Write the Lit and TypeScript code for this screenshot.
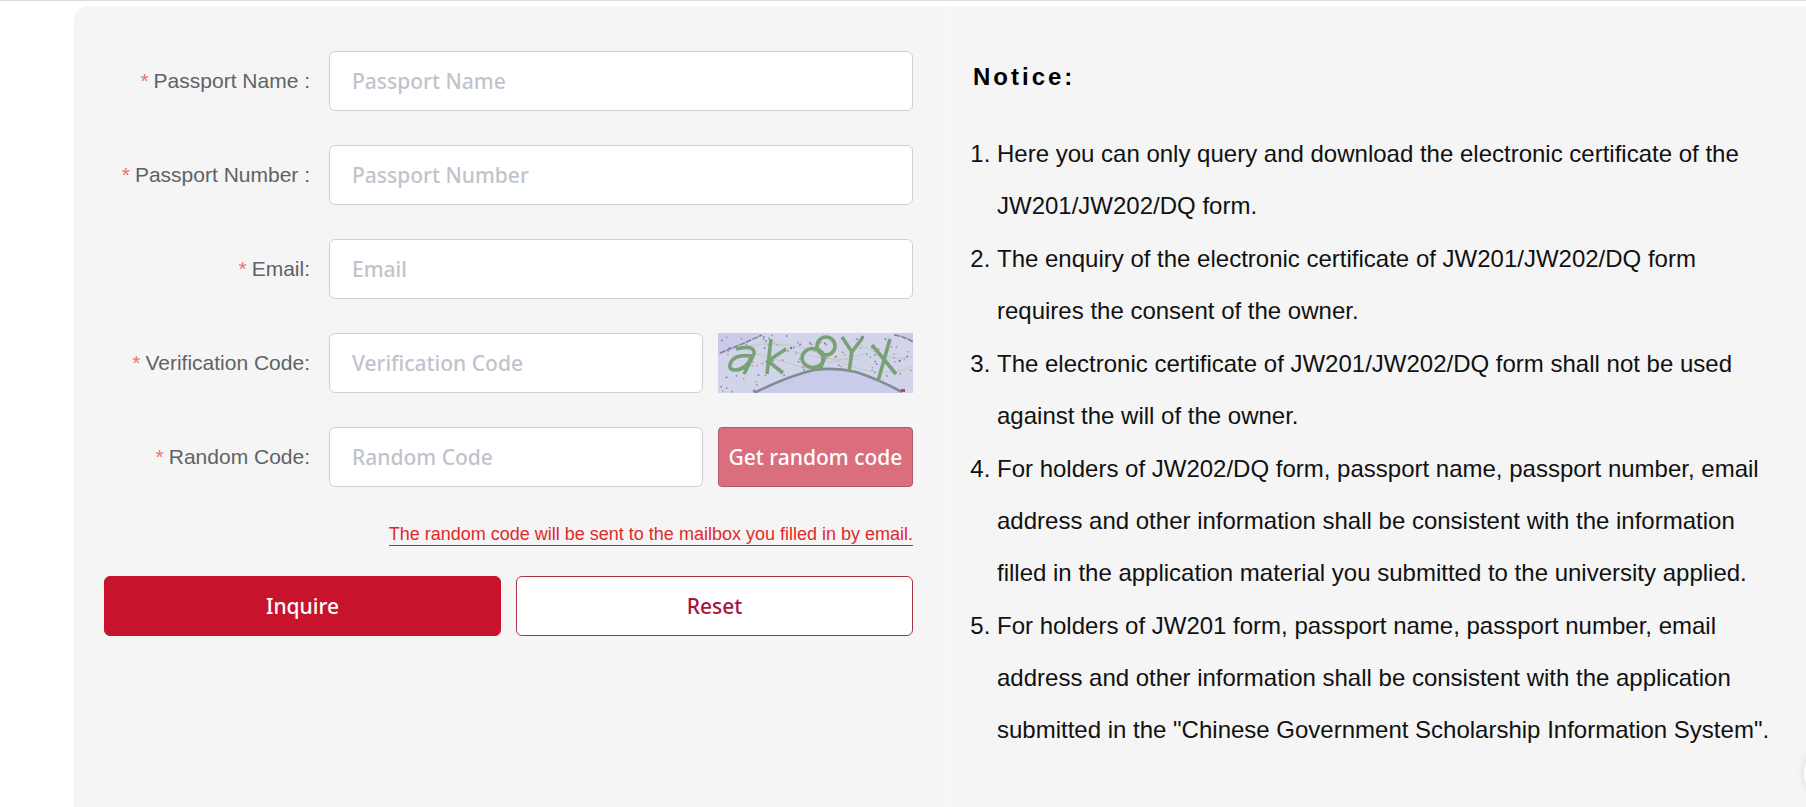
import { LitElement, html, svg, css } from "lit";
import { customElement } from "lit/decorators.js";

const NOTICES = [
  "Here you can only query and download the electronic certificate of the JW201/JW202/DQ form.",
  "The enquiry of the electronic certificate of JW201/JW202/DQ form requires the consent of the owner.",
  "The electronic certificate of JW201/JW202/DQ form shall not be used against the will of the owner.",
  "For holders of JW202/DQ form, passport name, passport number, email address and other information shall be consistent with the information filled in the application material you submitted to the university applied.",
  'For holders of JW201 form, passport name, passport number, email address and other information shall be consistent with the application submitted in the "Chinese Government Scholarship Information System".',
];

@customElement("captcha-picture")
class CaptchaPicture extends LitElement {
  static styles = css`
    :host { display: block; }
    .art { display: block; width: 100%; height: 100%; }
  `;

  // Deterministic speckles spread over the band above the arc
  private specks() {
    const colours = ["#4a4590", "#a25a98", "#c0606c", "#7d9a78", "#5a58b0", "#b98a50"];
    const out = [];
    let seed = 41;
    const next = () => (seed = (seed * 1103515245 + 12345) % 2147483648) / 2147483648;
    for (let i = 0; i < 130; i++) {
      const x = next() * 193;
      const y = next() * 58;
      const c = colours[Math.floor(next() * colours.length)];
      const arc = 34 + Math.pow((x - 115) / 78, 2) * 24;
      if (y < arc) out.push(svg`<rect x=${x} y=${y} width="1.5" height="1.5" fill=${c} opacity="0.75" />`);
    }
    return out;
  }

  render() {
    return html`<svg class="art" viewBox="0 0 195 60" preserveAspectRatio="none" role="img" aria-label="Verification code picture">
      <rect width="195" height="60" fill="#cacbea" />
      <path d="M0 24 L44 0 H175 L195 10 V60 H184 Q114 14 38 60 H0Z" fill="#d2d4ea" />
      <g fill="none" stroke="#bccdc3" stroke-width="1">
        <path d="M4 20 Q60 0 110 24 T194 34M30 18 L96 38M50 6 Q90 30 140 26M110 30 L150 20M140 10 Q170 30 194 24" />
      </g>
      ${this.specks()}
      <g fill="none" stroke="#7d8697">
        <path stroke-width="1.6" stroke-dasharray="6 1" d="M2 20 L24 11 L44 2M176 2 Q188 4 195 9" />
        <path stroke-width="2.6" stroke="#7f8d92" d="M36 60 Q70 43 96 37 Q116 34 138 39 Q160 46 184 59" />
      </g>
      <g fill="none" stroke="#78a276" stroke-width="3.6" stroke-linejoin="round">
        <path d="M18 16 Q37 11 36 21 L26 41M34 23 Q17 21 13 29 Q9 37 18 37 Q29 36 34 23" />
        <path d="M53 6 L49 41M68 16 L50 28 L65 40" />
        <ellipse cx="95" cy="25" rx="11" ry="9.5" />
        <circle cx="108" cy="13" r="9" />
        <path d="M104 19 Q107 30 101 37" />
        <path d="M124 4 L134 19 L145 4M134 18 L131 39" />
        <path d="M154 12 L178 41M172 6 L160 48" />
      </g>
      <rect x="183" y="56" width="4" height="3" fill="#c84450" />
    </svg>`;
  }
}

@customElement("app-root")
class AppRoot extends LitElement {
  static styles = css`
    :host {
      display: block;
      font-family: "Liberation Sans", Arial, sans-serif;
      background: #fff;
      color: #000;
    }
    * { box-sizing: border-box; }
    .page {
      position: relative;
      display: flex;
      min-height: 100vh;
      overflow: hidden;
      border-top: 1px solid #dcdcdc;
      padding: 5px 0 0 74px;
    }
    .panel {
      flex: 1;
      min-width: 0;
      display: grid;
      grid-template-columns: minmax(0, 870fr) minmax(0, 862fr);
      background: #f5f5f5;
      border-radius: 14px 0 0 0;
    }
    .query { padding: 45px 31px 32px 30px; }
    .row {
      display: grid;
      grid-template-columns: 206px minmax(0, 1fr);
      column-gap: 19px;
      align-items: center;
      height: 60px;
      margin-bottom: 34px;
    }
    .label {
      font-size: 21px;
      line-height: 30px;
      color: #606266;
      text-align: right;
      white-space: nowrap;
    }
    .label::before { content: "*"; color: #e87474; margin-right: 5px; }
    .control { display: flex; gap: 15px; height: 60px; }
    .field {
      flex: 1;
      min-width: 0;
      height: 60px;
      padding: 0 22px;
      border: 1px solid #cfd0d4;
      border-radius: 6px;
      background: #fff;
      color: #606266;
      font: 500 21px "Noto Sans", sans-serif;
      outline: none;
    }
    .field::placeholder { color: #c0c4cc; opacity: 1; }
    .side { flex: none; width: 195px; height: 60px; }
    .button {
      height: 60px;
      padding: 0;
      border: 1px solid #c7132b;
      border-radius: 6px;
      font: 500 21px "Noto Sans", sans-serif;
      white-space: nowrap;
      cursor: pointer;
    }
    .send { background: #db6e7c; border-color: #b45766; border-radius: 4px; color: #fff; }
    .hint { display: flex; justify-content: flex-end; margin: 36px 0 30px; }
    .hint-text {
      color: #e02a2a;
      font-size: 18px;
      line-height: 22px;
      border-bottom: 1px solid #b92637;
    }
    .actions { display: grid; grid-template-columns: 1fr 1fr; gap: 15px; }
    .inquire { background: #c7132b; color: #fff; }
    .reset { background: #fff; border-color: #a63345; color: #a8143c; }
    .notice {
      border-left: 6px solid #f7f7f7;
      padding: 51px 30px 32px 23px;
      font-size: 24px;
    }
    .title { margin: 0 0 31px; font-size: 24px; line-height: 40px; letter-spacing: 3px; }
    .list { margin: 0; padding-left: 24px; line-height: 52px; color: #111; }
    .item { margin-bottom: 1px; }
    .float {
      position: absolute;
      right: -58px;
      bottom: 4px;
      width: 60px;
      height: 60px;
      padding: 0;
      border: 0;
      border-radius: 50%;
      background: #fff;
      box-shadow: 0 0 8px rgba(0, 0, 0, 0.12);
    }
  `;

  private field(id: string, label: string, hint: string, side: unknown = "") {
    return html`<div class="row">
      <label class="label" for=${id}>${label}</label>
      <div class="control">
        <input class="field" id=${id} type="text" placeholder=${hint} required />
        ${side}
      </div>
    </div>`;
  }

  render() {
    return html`<div class="page">
      <main class="panel">
        <form class="query" @submit=${(e: Event) => e.preventDefault()}>
          ${this.field("name", "Passport Name :", "Passport Name")}
          ${this.field("number", "Passport Number :", "Passport Number")}
          ${this.field("email", "Email:", "Email")}
          ${this.field("verify", "Verification Code:", "Verification Code", html`<captcha-picture class="side"></captcha-picture>`)}
          ${this.field("random", "Random Code:", "Random Code", html`<button class="button send side" type="button">Get random code</button>`)}
          <div class="hint">
            <span class="hint-text">The random code will be sent to the mailbox you filled in by email.</span>
          </div>
          <div class="actions">
            <button class="button inquire" type="submit">Inquire</button>
            <button class="button reset" type="reset">Reset</button>
          </div>
        </form>
        <section class="notice">
          <h2 class="title">Notice:</h2>
          <ol class="list">
            ${NOTICES.map((n) => html`<li class="item">${n}</li>`)}
          </ol>
        </section>
      </main>
      <button class="float" type="button" aria-label="Help"></button>
    </div>`;
  }
}
